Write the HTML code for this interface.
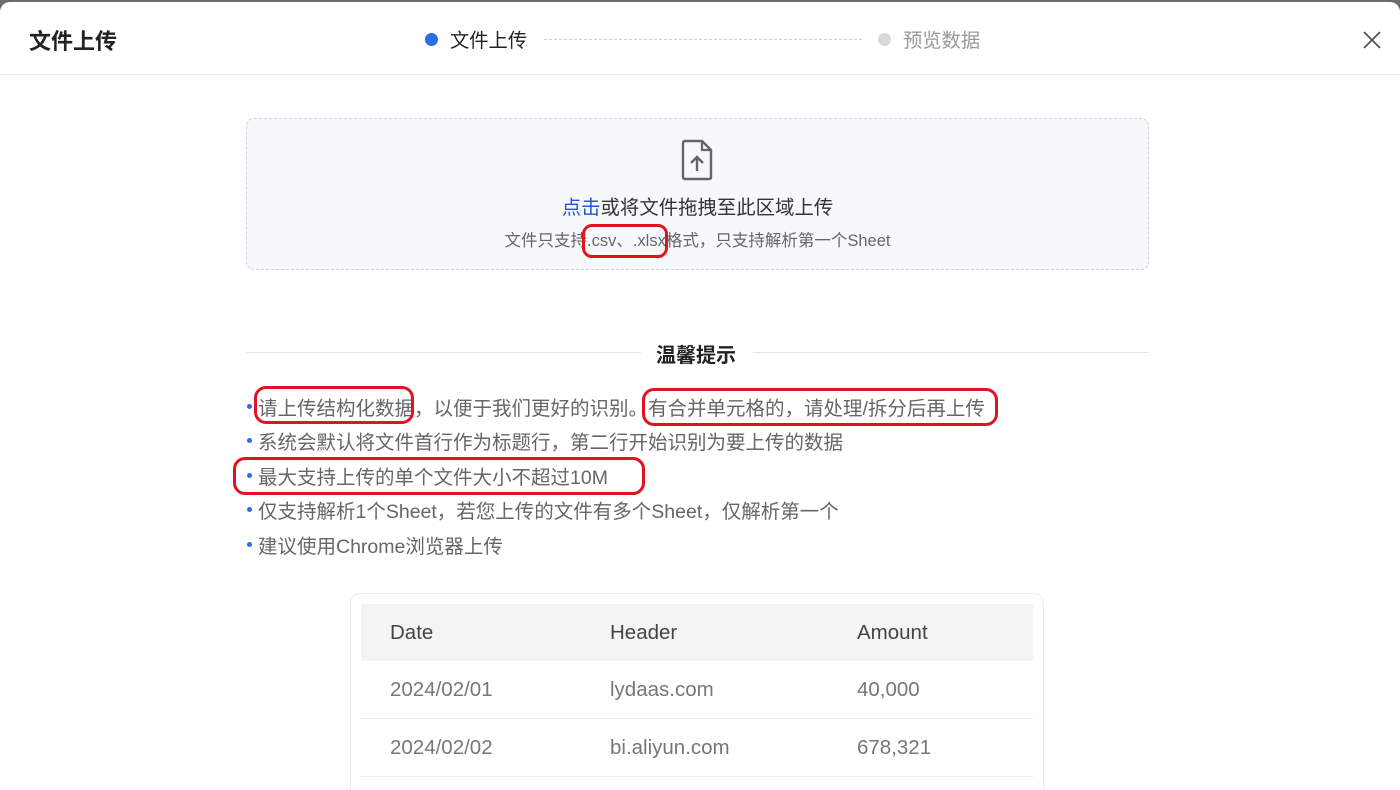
<!DOCTYPE html>
<html><head><meta charset="utf-8"><style>
*{margin:0;padding:0;box-sizing:border-box}
html,body{width:1400px;height:790px;overflow:hidden}
body{background:#6b6b6e;font-family:"Liberation Sans","Noto Sans CJK SC",sans-serif;position:relative}
.m{position:absolute;left:0;top:2px;width:1400px;height:788px;background:#fff;border-radius:10px 10px 0 0;overflow:hidden}
.a{position:absolute;white-space:nowrap}
.hd{position:absolute;left:0;top:0;width:1400px;height:73px;border-bottom:1px solid #ececec}
.red{position:absolute;border:3px solid #e0141e;border-radius:12px}
.li{position:absolute;left:247px;font-size:19.5px;color:#666;white-space:nowrap}
.li:before{content:"";display:inline-block;width:5px;height:5px;border-radius:50%;background:#2b6de8;margin-right:6px;vertical-align:middle;position:relative;top:-3px}
.tc{position:absolute;font-size:20.5px;white-space:nowrap}
</style></head><body>
<div class="m">
<div class="hd"></div>
<div class="a" style="left:29px;top:22px;font-size:22px;font-weight:bold;color:#222">文件上传</div>
<div class="a" style="left:425px;top:31px;width:13px;height:13px;border-radius:50%;background:#2b6de8"></div>
<div class="a" style="left:450px;top:23px;font-size:19.3px;color:#222">文件上传</div>
<div class="a" style="left:544px;top:37px;width:318px;border-top:1px dashed #d0d0d0"></div>
<div class="a" style="left:878px;top:31px;width:13px;height:13px;border-radius:50%;background:#d9d9d9"></div>
<div class="a" style="left:903px;top:23px;font-size:19.3px;color:#999">预览数据</div>
<svg class="a" style="left:1362px;top:28px" width="20" height="20" viewBox="0 0 20 20"><path d="M2 2L18 18M18 2L2 18" stroke="#555" stroke-width="1.8"/></svg>

<div class="a" style="left:246px;top:116px;width:903px;height:152px;background:#f6f8fb;border:1px dashed #cfd6df;border-radius:8px"></div>
<svg class="a" style="left:680px;top:137px" width="34" height="42" viewBox="0 0 34 42"><path d="M3 4Q3 2 5 2H22L31 11V38Q31 40 29 40H5Q3 40 3 38Z" fill="none" stroke="#666" stroke-width="2.4" stroke-linejoin="round"/><path d="M22 2V11H31" fill="none" stroke="#666" stroke-width="2.2"/><path d="M17 32V18M11 24L17 18L23 24" fill="none" stroke="#666" stroke-width="2.4"/></svg>
<div class="a" style="left:0;width:1395px;text-align:center;top:189px;font-size:19.4px;color:#333"><span style="color:#2456c8">点击</span>或将文件拖拽至此区域上传</div>
<div class="a" style="left:0;width:1395px;text-align:center;top:225px;font-size:16.5px;color:#666">文件只支持.csv、.xlsx格式，只支持解析第一个Sheet</div>
<div class="red" style="left:582px;top:222px;width:86px;height:34px;border-radius:10px"></div>

<div class="a" style="left:246px;top:350px;width:395px;border-top:1px solid #e6e6e6"></div>
<div class="a" style="left:753px;top:350px;width:396px;border-top:1px solid #e6e6e6"></div>
<div class="a" style="left:656px;top:337px;font-size:20px;font-weight:bold;color:#222">温馨提示</div>

<div class="li" style="top:390px">请上传结构化数据，以便于我们更好的识别。有合并单元格的，请处理/拆分后再上传</div>
<div class="li" style="top:424px">系统会默认将文件首行作为标题行，第二行开始识别为要上传的数据</div>
<div class="li" style="top:459px">最大支持上传的单个文件大小不超过10M</div>
<div class="li" style="top:493px">仅支持解析1个Sheet，若您上传的文件有多个Sheet，仅解析第一个</div>
<div class="li" style="top:528px">建议使用Chrome浏览器上传</div>
<div class="red" style="left:254px;top:384px;width:160px;height:38px"></div>
<div class="red" style="left:642px;top:386px;width:356px;height:38px"></div>
<div class="red" style="left:233px;top:455px;width:412px;height:38px"></div>

<div class="a" style="left:350px;top:591px;width:694px;height:220px;border:1px solid #ededed;border-radius:10px"></div>
<div class="a" style="left:361px;top:602px;width:672px;height:57px;background:#f4f4f4"></div>
<div class="a" style="left:361px;top:716px;width:672px;border-top:1px solid #ececec"></div>
<div class="a" style="left:361px;top:774px;width:672px;border-top:1px solid #ececec"></div>
<div class="tc" style="left:390px;top:619px;color:#444">Date</div>
<div class="tc" style="left:610px;top:619px;color:#444">Header</div>
<div class="tc" style="left:857px;top:619px;color:#444">Amount</div>
<div class="tc" style="left:390px;top:676px;color:#777">2024/02/01</div>
<div class="tc" style="left:610px;top:676px;color:#777">lydaas.com</div>
<div class="tc" style="left:857px;top:676px;color:#777">40,000</div>
<div class="tc" style="left:390px;top:734px;color:#777">2024/02/02</div>
<div class="tc" style="left:610px;top:734px;color:#777">bi.aliyun.com</div>
<div class="tc" style="left:857px;top:734px;color:#777">678,321</div>
</div>
</body></html>
